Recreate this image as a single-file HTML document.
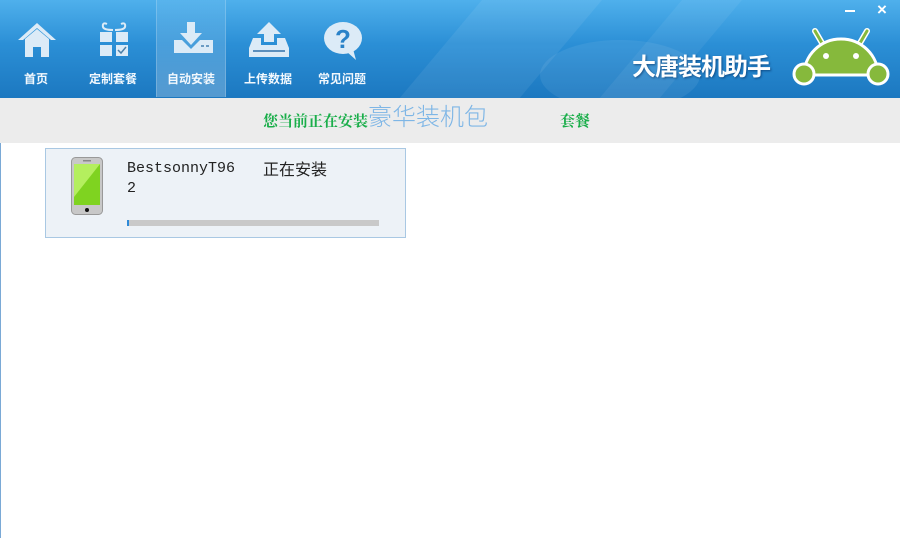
<!DOCTYPE html>
<html><head><meta charset="utf-8"><style>
*{margin:0;padding:0;box-sizing:border-box}
body{width:900px;height:538px;overflow:hidden;background:#fff;font-family:"Liberation Sans","Noto Sans CJK SC",sans-serif;position:relative}
#hdr{position:absolute;left:0;top:0;width:900px;height:98px;background:linear-gradient(180deg,#4fb0ec 0%,#2b8fd6 45%,#1c78c0 100%);overflow:hidden}
#hdr .hl{position:absolute;top:-20px;height:140px;transform:skewX(-40deg);background:rgba(255,255,255,0.07)}
.tb{position:absolute;top:0;width:70px;height:97px;text-align:center;color:#f2f8fd;font-size:12px;font-weight:bold}
.tb span{position:absolute;left:0;right:0;top:70px}
.tb svg{position:absolute;left:15px;top:20px}
#act{background:linear-gradient(180deg,rgba(255,255,255,0.05),rgba(255,255,255,0.25));border-left:1px solid rgba(255,255,255,.2);border-right:1px solid rgba(255,255,255,.2)}
#band{position:absolute;left:0;top:98px;width:900px;height:45px;background:#ececec}
.g{position:absolute;color:#1aae4a;font-weight:bold;font-size:15px;font-family:"Liberation Serif","Noto Serif CJK SC",serif}
#card{position:absolute;left:45px;top:148px;width:361px;height:90px;background:#edf2f7;border:1px solid #a9c8e3}
</style></head><body>
<div id="hdr">
 <div class="hl" style="left:440px;width:120px"></div>
 <div class="hl" style="left:640px;width:60px;background:rgba(255,255,255,.06)"></div>
 <div style="position:absolute;left:540px;top:40px;width:160px;height:70px;border-radius:50%;background:rgba(255,255,255,.07)"></div>
 <div class="tb" style="left:1px"><svg width="42" height="40" viewBox="0 0 42 40"><path d="M2 20 L21 3 L40 20 L35 20 L21 8 L7 20Z" fill="#dcebf7"/><path d="M9 19 L21 9 L33 19 V37 H25 V27 H17 V37 H9Z" fill="#dcebf7"/></svg><span>首页</span></div>
 <div class="tb" style="left:78px"><svg width="42" height="40" viewBox="0 0 42 40"><path d="M14 4 q-5 -2 -4 3 q1 3 10 3 M28 4 q5 -2 4 3 q-1 3 -10 3" stroke="#dcebf7" stroke-width="2" fill="none"/><rect x="7" y="12" width="12" height="10" fill="#dcebf7"/><rect x="23" y="12" width="12" height="10" fill="#dcebf7"/><rect x="7" y="25" width="12" height="11" fill="#dcebf7"/><rect x="23" y="25" width="12" height="11" fill="#dcebf7"/><path d="M25 30 l3 3 l5 -6" stroke="#4a7fa8" stroke-width="1.5" fill="none"/></svg><span>定制套餐</span></div>
 <div class="tb" id="act" style="left:156px"><svg width="42" height="40" viewBox="0 0 42 40"><path d="M15 2 H23 V13 H30 L19 25 L8 13 H15Z" fill="#dcebf7"/><path d="M2 20 H10 L19 29 L28 20 H41 V33 H2Z" fill="#dcebf7"/><rect x="29" y="25" width="3" height="2" fill="#6c9cc4"/><rect x="34" y="25" width="3" height="2" fill="#6c9cc4"/></svg><span>自动安装</span></div>
 <div class="tb" style="left:233px"><svg width="42" height="40" viewBox="0 0 42 40"><path d="M21 2 L33 14 H26 V22 H16 V14 H9Z" fill="#dcebf7"/><path d="M5 18 H13 V25 H29 V18 H37 L41 28 V37 H1 V28Z" fill="#dcebf7"/><rect x="5" y="30" width="32" height="2" fill="#5b8fbd"/></svg><span>上传数据</span></div>
 <div class="tb" style="left:307px"><svg width="42" height="40" viewBox="0 0 42 40"><ellipse cx="21" cy="18" rx="19" ry="16" fill="#dcebf7"/><path d="M24 31 L34 40 L31 29Z" fill="#dcebf7"/><text x="21" y="28" text-anchor="middle" font-size="26" font-weight="bold" fill="#2a82c8" font-family="Liberation Sans">?</text></svg><span>常见问题</span></div>
 <div style="position:absolute;left:632px;top:47px;color:#fff;font-size:24px;font-weight:bold;letter-spacing:-1px;text-shadow:1px 1px 2px rgba(0,40,90,.6)">大唐装机助手</div>
 <div style="position:absolute;left:845px;top:10px;width:10px;height:2px;background:#fff"></div>
 <div style="position:absolute;left:877px;top:0;color:#fff;font-size:17px;font-weight:bold">×</div>
 <svg style="position:absolute;left:790px;top:25px" width="104" height="62" viewBox="0 0 104 62">
  <path d="M25 6 L32 18 M77 6 L70 18" stroke="#fff" stroke-width="6" stroke-linecap="round"/>
  <path d="M25 6 L32 18 M77 6 L70 18" stroke="#86b93c" stroke-width="3" stroke-linecap="round"/>
  <path d="M14 50 A37 36 0 0 1 88 50Z" fill="#86b93c" stroke="#fff" stroke-width="3"/>
  <circle cx="36" cy="31" r="3" fill="#fff"/><circle cx="66" cy="31" r="3" fill="#fff"/>
  <circle cx="14" cy="49" r="10" fill="#86b93c" stroke="#fff" stroke-width="3"/>
  <circle cx="88" cy="49" r="10" fill="#86b93c" stroke="#fff" stroke-width="3"/>
 </svg>
</div>
<div id="band">
 <div class="g" style="left:263px;top:12px">您当前正在安装</div>
 <div style="position:absolute;left:368px;top:-1px;color:#7eb6e6;font-size:24px;font-family:'Noto Sans CJK SC',sans-serif;font-weight:300">豪华装机包</div>
 <div class="g" style="left:560px;top:12px">套餐</div>
</div>
<div style="position:absolute;left:0;top:143px;width:1px;height:395px;background:#7aa9d6"></div>
<div id="card">
 <svg style="position:absolute;left:25px;top:8px" width="32" height="58" viewBox="0 0 32 58"><rect x="0.5" y="0.5" width="31" height="57" rx="4" fill="#c8c8c8" stroke="#999"/><rect x="3" y="7" width="26" height="41" fill="#7fd320"/><path d="M3 7 H29 L3 40Z" fill="#b4ef5e"/><circle cx="16" cy="53" r="2" fill="#111"/><rect x="12" y="3" width="8" height="1.5" fill="#888"/></svg>
 <div style="position:absolute;left:81px;top:10px;font-family:'Liberation Mono','Noto Sans CJK SC',monospace;font-size:15px;color:#222;line-height:20px">BestsonnyT96<br>2</div>
 <div style="position:absolute;left:217px;top:9px;font-size:16px;color:#222;font-family:'Noto Sans CJK SC',sans-serif;line-height:20px">正在安装</div>
 <div style="position:absolute;left:81px;top:71px;width:252px;height:6px;background:#c9c9c9"><div style="width:2px;height:6px;background:#2d8ad8"></div></div>
</div>
</body></html>
